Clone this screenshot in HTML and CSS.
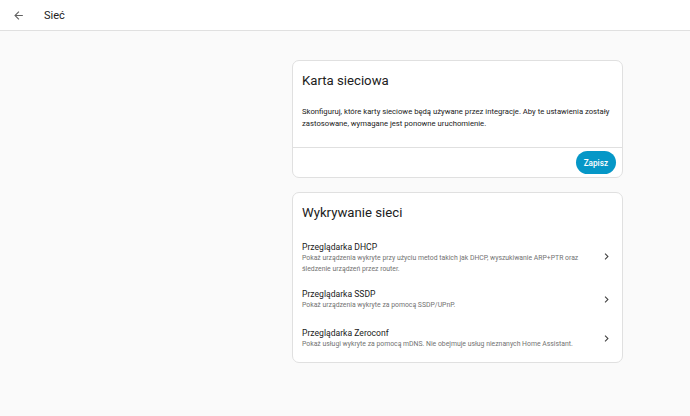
FILE: index.html
```html
<!DOCTYPE html>
<html lang="pl">
<head>
<meta charset="utf-8">
<title>Sieć</title>
<link rel="stylesheet" href="styles.css">
</head>
<body>
<header class="toolbar">
  <button class="back" aria-label="Wstecz">
    <svg viewBox="0 0 24 24" width="13" height="13"><path d="M20 11v2H8l5.5 5.5-1.42 1.42L4.16 12l7.92-7.92L13.5 5.5 8 11h12z" fill="currentColor"/></svg>
  </button>
  <div class="title">Sieć</div>
</header>
<main class="content">
  <section class="card">
    <h1 class="card-header">Karta sieciowa</h1>
    <div class="card-content">
      <p>Skonfiguruj, które karty sieciowe będą używane przez integracje. Aby te ustawienia zostały zastosowane, wymagane jest ponowne uruchomienie.</p>
    </div>
    <div class="card-actions">
      <button class="btn">Zapisz</button>
    </div>
  </section>
  <section class="card">
    <h1 class="card-header">Wykrywanie sieci</h1>
    <div class="list">
      <a class="item three-line">
        <div class="item-text">
          <div class="primary">Przeglądarka DHCP</div>
          <div class="secondary">Pokaż urządzenia wykryte przy użyciu metod takich jak DHCP, wyszukiwanie ARP+PTR oraz śledzenie urządzeń przez router.</div>
        </div>
        <svg class="chev" viewBox="0 0 24 24" width="13" height="13"><path d="M8.59 16.58 13.17 12 8.59 7.41 10 6l6 6-6 6-1.41-1.42z" fill="currentColor"/></svg>
      </a>
      <a class="item">
        <div class="item-text">
          <div class="primary">Przeglądarka SSDP</div>
          <div class="secondary">Pokaż urządzenia wykryte za pomocą SSDP/UPnP.</div>
        </div>
        <svg class="chev" viewBox="0 0 24 24" width="13" height="13"><path d="M8.59 16.58 13.17 12 8.59 7.41 10 6l6 6-6 6-1.41-1.42z" fill="currentColor"/></svg>
      </a>
      <a class="item">
        <div class="item-text">
          <div class="primary">Przeglądarka Zeroconf</div>
          <div class="secondary">Pokaż usługi wykryte za pomocą mDNS. Nie obejmuje usług nieznanych Home Assistant.</div>
        </div>
        <svg class="chev" viewBox="0 0 24 24" width="13" height="13"><path d="M8.59 16.58 13.17 12 8.59 7.41 10 6l6 6-6 6-1.41-1.42z" fill="currentColor"/></svg>
      </a>
    </div>
  </section>
</main>
</body>
</html>
```
FILE: styles.css
```css
html, body {
  margin: 0;
  padding: 0;
  height: 100%;
}
body {
  background: #fafafa;
  font-family: Roboto, "Noto Sans", sans-serif;
  color: #212121;
  overflow: hidden;
}
.toolbar {
  height: 30px;
  background: #ffffff;
  border-bottom: 1px solid #e0e0e0;
  display: flex;
  align-items: center;
  padding: 0 0 0 10px;
}
.back {
  background: none;
  border: none;
  padding: 0;
  width: 16px;
  height: 16px;
  display: flex;
  align-items: center;
  justify-content: center;
  color: #616161;
}
.title {
  margin-left: 18px;
  font-size: 11px;
  font-weight: 400;
  color: #212121;
}
.content {
  padding: 29px 0 0 292px;
  display: flex;
  flex-direction: column;
  gap: 14px;
  width: 331px;
}
.card {
  background: #ffffff;
  border: 1px solid #e0e0e0;
  border-radius: 7px;
  box-sizing: border-box;
}
.card-header {
  margin: 0;
  font-size: 13.2px;
  font-weight: 400;
  line-height: 18px;
  padding: 11px 9px 9px;
  color: #212121;
}
.card-content {
  padding: 0 9px 9px;
}
.card-content p {
  margin: 7px 0 8px;
  font-size: 7.7px;
  line-height: 12px;
  color: #212121;
}
.card-actions {
  border-top: 1px solid #e0e0e0;
  padding: 3px 6px 3px;
  display: flex;
  justify-content: flex-end;
}
.btn {
  background: #0597c7;
  color: #ffffff;
  border: none;
  border-radius: 12px;
  height: 23px;
  padding: 0 8px;
  font-family: Roboto, sans-serif;
  font-weight: 500;
  font-size: 8.2px;
}
.list {
  padding: 2px 0 4px;
}
.item {
  display: flex;
  align-items: center;
  height: 39px;
  box-sizing: border-box;
  padding: 0 9px;
  gap: 10px;
}
.item.three-line {
  height: 47px;
}
.item-text {
  flex: 1;
  align-self: flex-start;
  padding-top: 8px;
}
.primary {
  font-size: 8.6px;
  line-height: 12px;
  color: #212121;
}
.secondary {
  font-size: 6.85px;
  line-height: 10.5px;
  color: #727272;
}
.chev {
  color: #424242;
  flex: none;
}
```
